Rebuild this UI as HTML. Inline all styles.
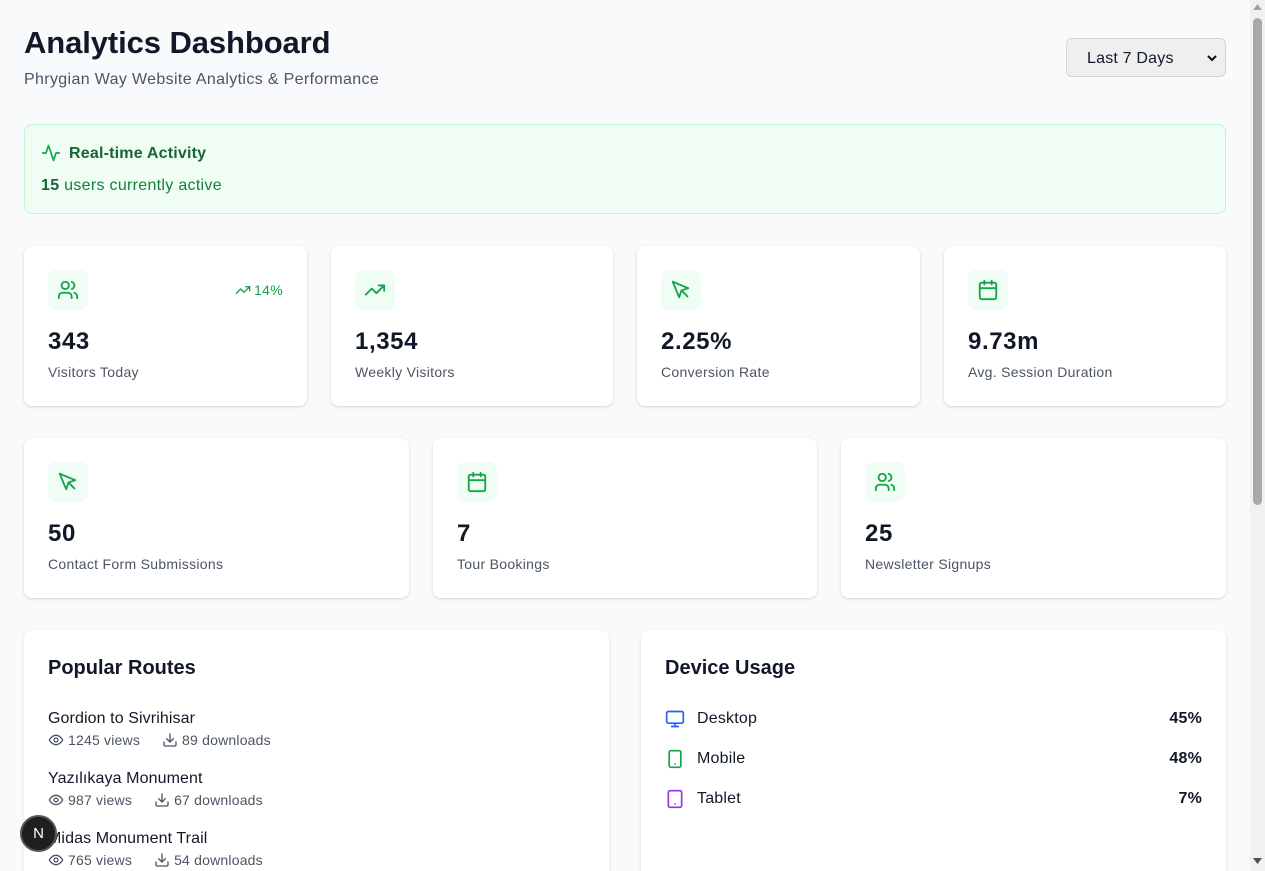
<!DOCTYPE html>
<html><head><meta charset="utf-8"><style>
*{box-sizing:border-box;margin:0;padding:0}
html{width:1265px;height:871px;overflow:hidden}
body{width:1265px;height:871px;overflow:hidden;background:#f9fafb;font-family:"Liberation Sans",sans-serif;color:#111827;position:relative}
.abs{position:absolute}
h1{position:absolute;left:24px;top:25px;font-size:31px;font-weight:700;line-height:36px;letter-spacing:-0.1px}
.sub{left:24px;top:71px;font-size:16px;color:#4b5563;letter-spacing:0.35px}
.sel{left:1066px;top:38px;width:160px;height:39px;border:1px solid #d1d5db;border-radius:6px;background:#efefef;font-size:16px;padding:11px 0 0 20px;letter-spacing:0.2px}
.rt{left:24px;top:124px;width:1202px;height:90px;background:#f0fdf4;border:1px solid #bbf7d0;border-radius:8px}
.card{position:absolute;background:#fff;border-radius:8px;box-shadow:0 1px 3px rgba(0,0,0,.1),0 1px 2px rgba(0,0,0,.06);height:160px}
.ib{position:absolute;left:24px;top:24px;width:40px;height:40px;border-radius:8px;background:#f0fdf4;display:flex;align-items:center;justify-content:center}
.num{position:absolute;left:24px;top:81px;font-size:24px;font-weight:700;line-height:30px;letter-spacing:0.6px}
.lab{position:absolute;left:24px;top:118px;font-size:14px;color:#4b5563;letter-spacing:0.3px}
.panel{position:absolute;top:630px;height:260px;background:#fff;border-radius:8px;box-shadow:0 1px 3px rgba(0,0,0,.1)}
.ph{position:absolute;left:24px;top:27px;font-size:20px;font-weight:700}
.rn{position:absolute;left:24px;font-size:16px;letter-spacing:0.1px}
.rm{position:absolute;left:24px;font-size:14px;color:#4b5563;display:flex;align-items:center;gap:4px;letter-spacing:0.2px}
.dv{position:absolute;left:24px;right:24px;font-size:16px;display:flex;align-items:center;letter-spacing:0.2px}
.dv b{margin-left:auto}
svg{display:block}
</style></head><body>
<h1>Analytics Dashboard</h1>
<div class="abs sub">Phrygian Way Website Analytics &amp; Performance</div>
<div class="abs sel">Last 7 Days<svg class="abs" style="left:140px;top:15px" width="10" height="8" viewBox="0 0 10 8"><path d="M1 2l4 4 4-4" stroke="#111" stroke-width="2" fill="none"/></svg></div>
<div class="abs rt">
<svg class="abs" style="left:16px;top:18px" width="20" height="20" viewBox="0 0 24 24" fill="none" stroke="#16a34a" stroke-width="2" stroke-linecap="round" stroke-linejoin="round"><path d="M22 12h-4l-3 9L9 3l-3 9H2"/></svg>
<div class="abs" style="left:44px;top:20px;font-size:16px;font-weight:700;color:#166534;letter-spacing:0.2px">Real-time Activity</div>
<div class="abs" style="left:16px;top:52px;font-size:16px;color:#15803d;letter-spacing:0.3px"><b style="color:#166534">15</b> users currently active</div>
</div>

<!-- row 1 -->
<div class="card" style="left:24px;top:246px;width:283px">
<div class="ib"><svg width="22" height="22" viewBox="0 0 24 24" fill="none" stroke="#16a34a" stroke-width="2" stroke-linecap="round"><path d="M16 21v-2a4 4 0 0 0-4-4H6a4 4 0 0 0-4 4v2"/><circle cx="9" cy="7" r="4"/><path d="M22 21v-2a4 4 0 0 0-3-3.87M16 3.13a4 4 0 0 1 0 7.75"/></svg></div>
<div class="abs" style="right:24px;top:36px;font-size:14px;color:#16a34a;display:flex;align-items:center;gap:3px;letter-spacing:0.3px"><svg width="16" height="16" viewBox="0 0 24 24" fill="none" stroke="#16a34a" stroke-width="2" stroke-linecap="round" stroke-linejoin="round"><path d="M22 7l-8.5 8.5-5-5L2 17M16 7h6v6"/></svg>14%</div>
<div class="num">343</div><div class="lab">Visitors Today</div></div>
<div class="card" style="left:331px;top:246px;width:282px">
<div class="ib"><svg width="22" height="22" viewBox="0 0 24 24" fill="none" stroke="#16a34a" stroke-width="2" stroke-linecap="round" stroke-linejoin="round"><path d="M22 7l-8.5 8.5-5-5L2 17M16 7h6v6"/></svg></div>
<div class="num">1,354</div><div class="lab">Weekly Visitors</div></div>
<div class="card" style="left:637px;top:246px;width:283px">
<div class="ib"><svg width="22" height="22" viewBox="0 0 24 24" fill="none" stroke="#16a34a" stroke-width="2" stroke-linecap="round" stroke-linejoin="round"><path d="M3 3l7 17 2.5-7.5L20 10z"/><path d="M13 13l6 6"/></svg></div>
<div class="num">2.25%</div><div class="lab">Conversion Rate</div></div>
<div class="card" style="left:944px;top:246px;width:282px">
<div class="ib"><svg width="22" height="22" viewBox="0 0 24 24" fill="none" stroke="#16a34a" stroke-width="2" stroke-linecap="round"><rect x="3" y="4" width="18" height="18" rx="2"/><path d="M16 2v4M8 2v4M3 10h18"/></svg></div>
<div class="num">9.73m</div><div class="lab">Avg. Session Duration</div></div>

<!-- row 2 -->
<div class="card" style="left:24px;top:438px;width:385px">
<div class="ib"><svg width="22" height="22" viewBox="0 0 24 24" fill="none" stroke="#16a34a" stroke-width="2" stroke-linecap="round" stroke-linejoin="round"><path d="M3 3l7 17 2.5-7.5L20 10z"/><path d="M13 13l6 6"/></svg></div>
<div class="num">50</div><div class="lab">Contact Form Submissions</div></div>
<div class="card" style="left:433px;top:438px;width:384px">
<div class="ib"><svg width="22" height="22" viewBox="0 0 24 24" fill="none" stroke="#16a34a" stroke-width="2" stroke-linecap="round"><rect x="3" y="4" width="18" height="18" rx="2"/><path d="M16 2v4M8 2v4M3 10h18"/></svg></div>
<div class="num">7</div><div class="lab">Tour Bookings</div></div>
<div class="card" style="left:841px;top:438px;width:385px">
<div class="ib"><svg width="22" height="22" viewBox="0 0 24 24" fill="none" stroke="#16a34a" stroke-width="2" stroke-linecap="round"><path d="M16 21v-2a4 4 0 0 0-4-4H6a4 4 0 0 0-4 4v2"/><circle cx="9" cy="7" r="4"/><path d="M22 21v-2a4 4 0 0 0-3-3.87M16 3.13a4 4 0 0 1 0 7.75"/></svg></div>
<div class="num">25</div><div class="lab">Newsletter Signups</div></div>

<div class="panel" style="left:24px;width:585px">
<div class="ph">Popular Routes</div>
<div class="rn" style="top:80px">Gordion to Sivrihisar</div>
<div class="rm" style="top:102px"><svg width="16" height="16" viewBox="0 0 24 24" fill="none" stroke="#4b5563" stroke-width="2"><path d="M2 12s3.5-7 10-7 10 7 10 7-3.5 7-10 7S2 12 2 12z"/><circle cx="12" cy="12" r="3"/></svg>1245 views<span style="width:14px"></span><svg width="16" height="16" viewBox="0 0 24 24" fill="none" stroke="#4b5563" stroke-width="2" stroke-linecap="round"><path d="M21 15v4a2 2 0 0 1-2 2H5a2 2 0 0 1-2-2v-4M7 10l5 5 5-5M12 15V3"/></svg>89 downloads</div>
<div class="rn" style="top:140px">Yazılıkaya Monument</div>
<div class="rm" style="top:162px"><svg width="16" height="16" viewBox="0 0 24 24" fill="none" stroke="#4b5563" stroke-width="2"><path d="M2 12s3.5-7 10-7 10 7 10 7-3.5 7-10 7S2 12 2 12z"/><circle cx="12" cy="12" r="3"/></svg>987 views<span style="width:14px"></span><svg width="16" height="16" viewBox="0 0 24 24" fill="none" stroke="#4b5563" stroke-width="2" stroke-linecap="round"><path d="M21 15v4a2 2 0 0 1-2 2H5a2 2 0 0 1-2-2v-4M7 10l5 5 5-5M12 15V3"/></svg>67 downloads</div>
<div class="rn" style="top:200px">Midas Monument Trail</div>
<div class="rm" style="top:222px"><svg width="16" height="16" viewBox="0 0 24 24" fill="none" stroke="#4b5563" stroke-width="2"><path d="M2 12s3.5-7 10-7 10 7 10 7-3.5 7-10 7S2 12 2 12z"/><circle cx="12" cy="12" r="3"/></svg>765 views<span style="width:14px"></span><svg width="16" height="16" viewBox="0 0 24 24" fill="none" stroke="#4b5563" stroke-width="2" stroke-linecap="round"><path d="M21 15v4a2 2 0 0 1-2 2H5a2 2 0 0 1-2-2v-4M7 10l5 5 5-5M12 15V3"/></svg>54 downloads</div>
</div>

<div class="panel" style="left:641px;width:585px">
<div class="ph">Device Usage</div>
<div class="dv" style="top:79px"><svg width="20" height="20" viewBox="0 0 24 24" fill="none" stroke="#2563eb" stroke-width="2" stroke-linecap="round"><rect x="2" y="3" width="20" height="14" rx="2"/><path d="M8 21h8M12 17v4"/></svg><span style="margin-left:12px">Desktop</span><b>45%</b></div>
<div class="dv" style="top:119px"><svg width="20" height="20" viewBox="0 0 24 24" fill="none" stroke="#16a34a" stroke-width="2" stroke-linecap="round"><rect x="5" y="2" width="14" height="20" rx="2"/><path d="M12 18h.01"/></svg><span style="margin-left:12px">Mobile</span><b>48%</b></div>
<div class="dv" style="top:159px"><svg width="20" height="20" viewBox="0 0 24 24" fill="none" stroke="#9333ea" stroke-width="2" stroke-linecap="round"><rect x="4" y="2" width="16" height="20" rx="2"/><path d="M12 18h.01"/></svg><span style="margin-left:12px">Tablet</span><b>7%</b></div>
</div>

<div class="abs" style="left:20px;top:815px;width:37px;height:37px;border-radius:50%;background:#1f1f1f;border:2px solid #555;color:#fff;font-size:15px;display:flex;align-items:center;justify-content:center">N</div>

<div class="abs" style="left:1250px;top:0;width:15px;height:871px;background:#f1f1f1"></div>
<div class="abs" style="left:1253px;top:18px;width:9px;height:487px;background:#a8a8a8;border-radius:5px"></div>
<svg class="abs" style="left:1253px;top:4px" width="9" height="6"><path d="M0 6L4.5 0 9 6z" fill="#a3a3a3"/></svg>
<svg class="abs" style="left:1253px;top:858px" width="9" height="6"><path d="M0 0L4.5 6 9 0z" fill="#505050"/></svg>
</body></html>
